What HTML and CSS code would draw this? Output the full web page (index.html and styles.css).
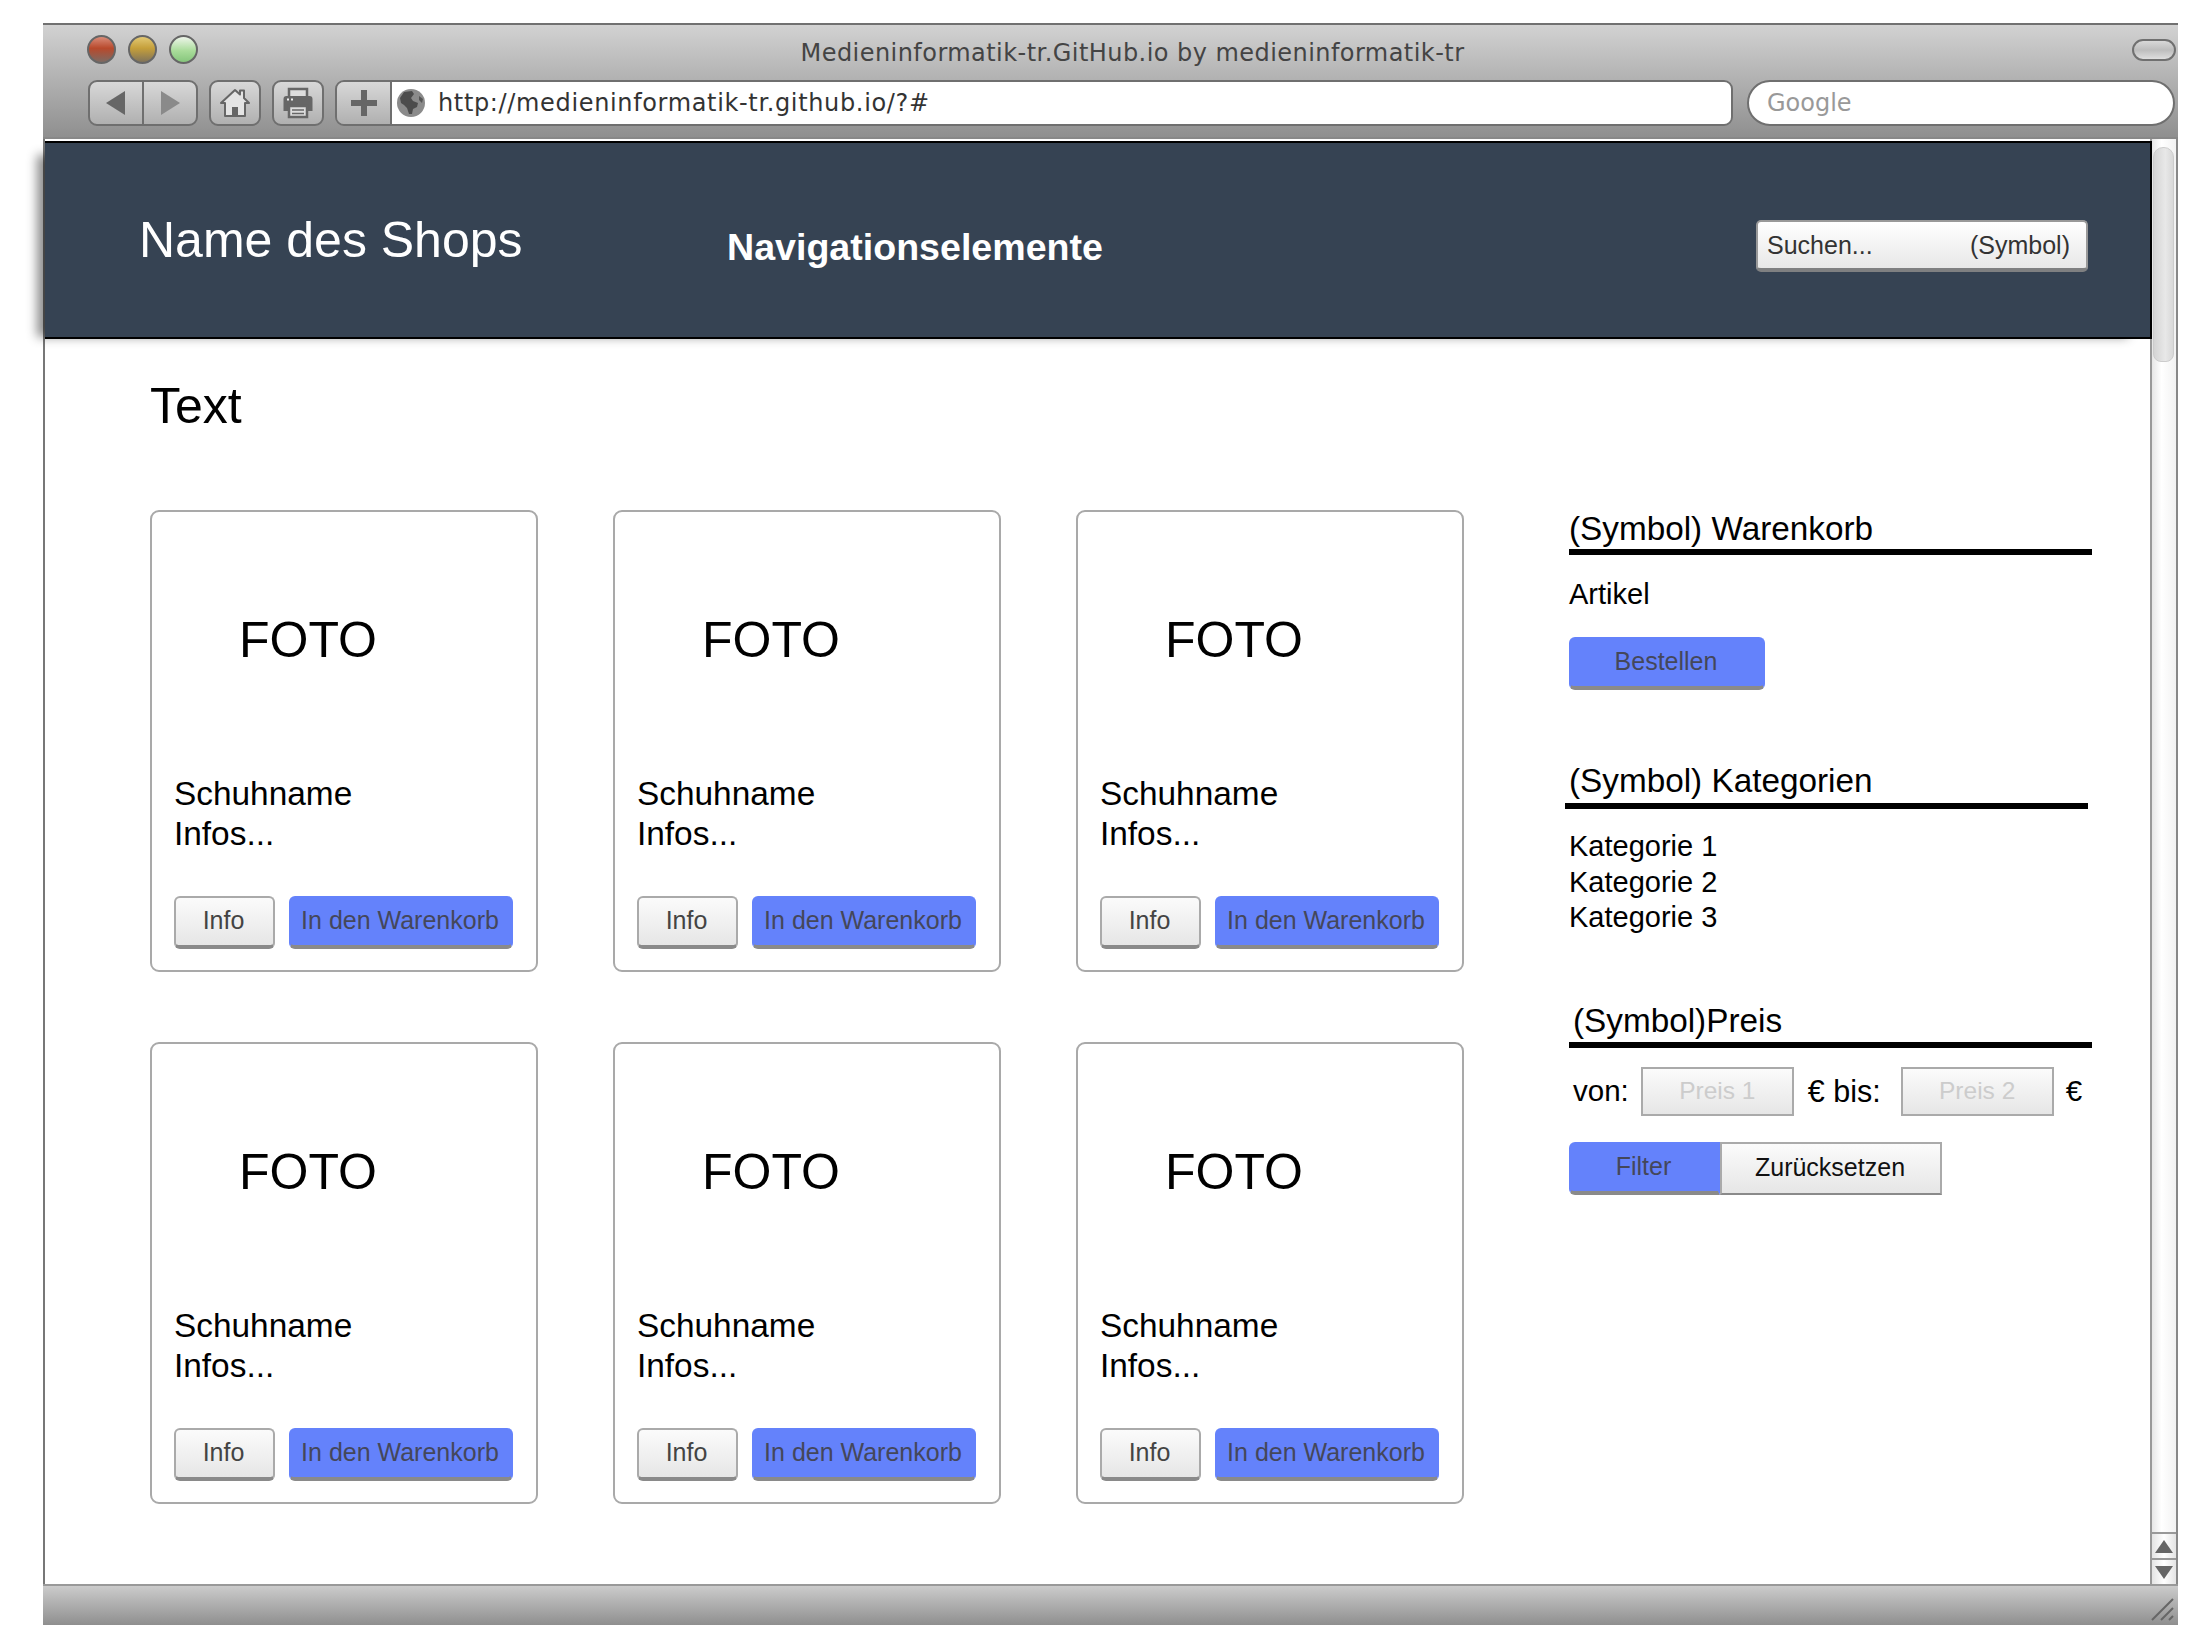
FILE: index.html
```html
<!DOCTYPE html>
<html>
<head>
    <meta charset="utf-8">
    <title>Name des Shops</title>
    <link rel="stylesheet" href="styles.css">
</head>
<body>
    <div class="window">
        <div class="chrome">
            <div class="titlerow">
                <div class="lights">
                    <span class="light red"></span>
                    <span class="light yellow"></span>
                    <span class="light green"></span>
                </div>
                <div class="wintitle">Medieninformatik-tr.GitHub.io by medieninformatik-tr</div>
                <span class="pill"></span>
            </div>
            <div class="toolrow">
                <div class="toolbtn navgroup">
                    <span class="navcell"><svg width="26" height="28" viewBox="0 0 26 28"><path d="M22 2V26L3 14Z" fill="#666"/></svg></span>
                    <span class="navcell"><svg width="26" height="28" viewBox="0 0 26 28"><path d="M4 2V26L23 14Z" fill="#8a8a8a"/></svg></span>
                </div>
                <div class="toolbtn single">
                    <svg width="32" height="30" viewBox="0 0 32 30"><path d="M2 15L16 2L21 6.500V2.500H25V10L30 15H26V28H6V15Z" fill="#e4e4e4" stroke="#666" stroke-width="2" stroke-linejoin="round"/><path d="M13 28V19H19V28Z" fill="#666"/></svg>
                </div>
                <div class="toolbtn single">
                    <svg width="34" height="32" viewBox="0 0 34 32"><path d="M8 9V2H26V9" fill="#ddd" stroke="#666" stroke-width="2.500"/><path d="M7 24H2.500V12Q2.500 9 5.500 9H28.500Q31.500 9 31.500 12V24H27V19H7Z" fill="#666"/><path d="M8 19H26V30H8Z" fill="#ddd" stroke="#666" stroke-width="2.500"/><path d="M11 23H23M11 26.500H23" stroke="#666" stroke-width="1.500"/><path d="M6 12.500H8M10 12.500H12" stroke="#eee" stroke-width="2"/></svg>
                </div>
                <div class="addressbar">
                    <span class="addbtn"><svg width="26" height="26" viewBox="0 0 26 26"><path d="M10 0H16V10H26V16H16V26H10V16H0V10H10Z" fill="#666"/></svg></span>
                    <div class="urlfield">
                        <svg width="28" height="28" viewBox="0 0 28 28"><circle cx="14" cy="14" r="14" fill="#8b8b8b"/><path d="M7 3L15 2L17 5L14 9L16 12L21 14L20 18L16 20L15 25L12 25L10 19L7 16L4 14L3 9Z" fill="#4c4c4c"/><path d="M22 7L26 10L25 14L22 11Z" fill="#555"/></svg>
                        <span class="url">http://medieninformatik-tr.github.io/?#</span>
                    </div>
                </div>
                <div class="googlefield">Google</div>
            </div>
        </div>

        <div class="viewport">
            <div class="page">
                <div class="shopheader">
                    <div class="shopname">Name des Shops</div>
                    <div class="shopnav">Navigationselemente</div>
                    <div class="shopsearch"><span>Suchen...</span><span>(Symbol)</span></div>
                </div>

                <div class="content">
                    <h1 class="intro">Text</h1>
                    <div class="mainrow">
                        <div class="cards">
                            <div class="card">
                                <div class="foto">FOTO</div>
                                <div class="cardtext">Schuhname<br>Infos...</div>
                                <div class="cardbtns"><button class="btn infobtn">Info</button><button class="btn blue cartbtn">In den Warenkorb</button></div>
                            </div>
                            <div class="card">
                                <div class="foto">FOTO</div>
                                <div class="cardtext">Schuhname<br>Infos...</div>
                                <div class="cardbtns"><button class="btn infobtn">Info</button><button class="btn blue cartbtn">In den Warenkorb</button></div>
                            </div>
                            <div class="card">
                                <div class="foto">FOTO</div>
                                <div class="cardtext">Schuhname<br>Infos...</div>
                                <div class="cardbtns"><button class="btn infobtn">Info</button><button class="btn blue cartbtn">In den Warenkorb</button></div>
                            </div>
                            <div class="card">
                                <div class="foto">FOTO</div>
                                <div class="cardtext">Schuhname<br>Infos...</div>
                                <div class="cardbtns"><button class="btn infobtn">Info</button><button class="btn blue cartbtn">In den Warenkorb</button></div>
                            </div>
                            <div class="card">
                                <div class="foto">FOTO</div>
                                <div class="cardtext">Schuhname<br>Infos...</div>
                                <div class="cardbtns"><button class="btn infobtn">Info</button><button class="btn blue cartbtn">In den Warenkorb</button></div>
                            </div>
                            <div class="card">
                                <div class="foto">FOTO</div>
                                <div class="cardtext">Schuhname<br>Infos...</div>
                                <div class="cardbtns"><button class="btn infobtn">Info</button><button class="btn blue cartbtn">In den Warenkorb</button></div>
                            </div>
                        </div>

                        <div class="sidebar">
                            <h2 class="sidehead">(Symbol) Warenkorb</h2>
                            <div class="article">Artikel</div>
                            <button class="btn blue orderbtn">Bestellen</button>

                            <h2 class="sidehead shifted">(Symbol) Kategorien</h2>
                            <div class="catlist">Kategorie 1<br>Kategorie 2<br>Kategorie 3</div>

                            <h2 class="sidehead pricehead">(Symbol)Preis</h2>
                            <div class="pricerow">
                                <span>von:</span>
                                <input class="priceinput" type="text" placeholder="Preis 1">
                                <span class="bis">€ bis:</span>
                                <input class="priceinput" type="text" placeholder="Preis 2">
                                <span class="euro">€</span>
                            </div>
                            <div class="filterbtns">
                                <button class="btn blue filterbtn">Filter</button><button class="btn resetbtn">Zurücksetzen</button>
                            </div>
                        </div>
                    </div>
                </div>
            </div>

            <div class="scrollbar">
                <div class="scrollthumb"></div>
                <div class="scrollarrow"><svg width="18" height="13" viewBox="0 0 18 13"><path d="M9 0L18 13H0Z" fill="#666"/></svg></div>
                <div class="scrollarrow"><svg width="18" height="13" viewBox="0 0 18 13"><path d="M0 0H18L9 13Z" fill="#666"/></svg></div>
            </div>
        </div>

        <div class="statusbar">
            <svg class="grip" width="24" height="24" viewBox="0 0 24 24"><path d="M2 23L23 2M11 23L23 11M19 23L23 19" stroke="#666" stroke-width="2"/></svg>
        </div>
    </div>
</body>
</html>
```

FILE: styles.css
```css
html, body {
    margin: 0;
    padding: 0;
    background-color: #fff;
}
body {
    padding: 23px 0 0 43px;
    font-family: "Liberation Sans", Arial, sans-serif;
    color: #000;
}
button, input {
    font-family: inherit;
    margin: 0;
}

/* browser window */
.window {
    width: 2135px;
    height: 1602px;
    display: flex;
    flex-direction: column;
    box-sizing: border-box;
    border-left: 2px solid #777;
    border-right: 2px solid #888;
}
.chrome {
    position: relative;
    z-index: 2;
    height: 116px;
    box-sizing: border-box;
    margin: 0 -2px;
    padding: 0 2px;
    border-top: 2px solid #717171;
    border-bottom: 2px solid #888;
    background: linear-gradient(#d2d2d2, #8f8f8f);
    font-family: "DejaVu Sans", sans-serif;
}
.titlerow {
    height: 55px;
    display: flex;
    align-items: center;
    position: relative;
}
.lights {
    display: flex;
    gap: 12px;
    margin-left: 42px;
    margin-top: -6px;
}
.light {
    width: 25px;
    height: 25px;
    border-radius: 50%;
    border: 2px solid #666;
}
.red { background: linear-gradient(#d98b78, #b8492c 45%, #7d6a62); }
.yellow { background: linear-gradient(#e2c873, #c59f3a 45%, #80735a); }
.green { background: linear-gradient(#eef5ea, #a9dc9a 55%, #86c67c); }
.wintitle {
    position: absolute;
    left: 0;
    right: 0;
    top: 13px;
    padding-left: 44px;
    text-align: center;
    font-size: 24px;
    letter-spacing: 0.450px;
    line-height: 30px;
    color: #444;
}
.pill {
    position: absolute;
    right: 0;
    top: 14px;
    width: 40px;
    height: 18px;
    border: 2px solid #707070;
    border-radius: 11px;
    background: linear-gradient(#d8d8d8, #bdbdbd 50%, #dedede);
}
.toolrow {
    display: flex;
    margin-left: 43px;
    height: 45px;
}
.toolbtn {
    box-sizing: border-box;
    height: 46px;
    border: 2px solid #6f6f6f;
    border-radius: 9px;
    background: linear-gradient(#d8d8d8, #b0b0b0);
    display: flex;
    align-items: center;
    justify-content: center;
}
.navgroup {
    width: 110px;
    margin-right: 11px;
}
.navcell {
    flex: 1;
    height: 100%;
    display: flex;
    align-items: center;
    justify-content: center;
}
.navcell + .navcell {
    border-left: 2px solid #6f6f6f;
}
.single {
    width: 52px;
    margin-right: 11px;
}
.addressbar {
    width: 1398px;
    height: 46px;
    box-sizing: border-box;
    display: flex;
    border: 2px solid #6f6f6f;
    border-radius: 9px;
    overflow: hidden;
}
.addbtn {
    width: 53px;
    display: flex;
    align-items: center;
    justify-content: center;
    background: linear-gradient(#d8d8d8, #b0b0b0);
    border-right: 2px solid #6f6f6f;
}
.urlfield {
    flex: 1;
    background-color: #fff;
    display: flex;
    align-items: center;
    padding-left: 5px;
    gap: 13px;
}
.url {
    font-size: 24px;
    letter-spacing: 0.650px;
    color: #333;
}
.googlefield {
    width: 428px;
    height: 46px;
    box-sizing: border-box;
    margin-left: 14px;
    border: 2px solid #6f6f6f;
    border-radius: 23px;
    background-color: #fff;
    padding-left: 18px;
    font-size: 24px;
    line-height: 42px;
    color: #999;
}

/* page inside the browser */
.viewport {
    flex: 1;
    display: flex;
    min-height: 0;
}
.page {
    flex: 1;
    min-width: 0;
    position: relative;
    z-index: 1;
}
.shopheader {
    height: 198px;
    box-sizing: border-box;
    margin: 2px -2px 0 0;
    display: flex;
    align-items: center;
    padding: 0 62px 0 94px;
    background-color: #364353;
    border: solid #000;
    border-width: 2px 2px 2px 0;
    box-shadow: -16px 6px 10px -8px rgba(0, 0, 0, 0.45);
    color: #fff;
}
.shopname {
    width: 588px;
    font-size: 50px;
    line-height: 60px;
}
.shopnav {
    flex: 1;
    font-size: 37.600px;
    font-weight: bold;
    margin-top: 15px;
}
.shopsearch {
    width: 332px;
    height: 52px;
    box-sizing: border-box;
    margin-top: 12px;
    padding: 0 16px 0 9px;
    display: flex;
    justify-content: space-between;
    align-items: center;
    border: 2px solid #999;
    border-bottom: 4px solid #7f8081;
    border-radius: 5px;
    background: linear-gradient(#fff, #e8e8e8);
    font-size: 25px;
    color: #333;
}
.content {
    padding-left: 105px;
}
.intro {
    margin: 34px 0 0;
    font-size: 50px;
    font-weight: normal;
    line-height: 66px;
}
.mainrow {
    display: flex;
    margin-top: 71px;
}
.cards {
    display: grid;
    grid-template-columns: repeat(3, 388px);
    grid-auto-rows: 462px;
    column-gap: 75px;
    row-gap: 70px;
}
.card {
    box-sizing: border-box;
    display: flex;
    flex-direction: column;
    padding: 99px 22px 21px;
    border: 2px solid #a9a9a9;
    border-radius: 9px;
}
.foto {
    padding-left: 65px;
    font-size: 50px;
    line-height: 58px;
}
.cardtext {
    margin-top: 105px;
    font-size: 33.400px;
    line-height: 39.500px;
}
.cardbtns {
    margin-top: auto;
    display: flex;
    gap: 14px;
}
.btn {
    height: 53px;
    box-sizing: border-box;
    padding: 0 2px 2px 0;
    border: 2px solid #aaa;
    border-bottom: 4px solid #8a8a8a;
    border-radius: 6px;
    background: linear-gradient(#fbfbfb, #e6e6e6);
    font-size: 25px;
    color: #444;
}
.blue {
    background: #6482fb;
    border-color: #6482fb;
    border-bottom-color: #8a8a8a;
    color: #44475a;
}
.infobtn { width: 101px; }
.cartbtn { width: 224px; }

/* right column */
.sidebar {
    width: 523px;
    margin: -1px 0 0 105px;
}
.sidehead {
    margin: 0;
    font-size: 33.300px;
    font-weight: normal;
    line-height: 40px;
    border-bottom: 6px solid #000;
}
.article {
    margin-top: 21px;
    font-size: 29px;
    line-height: 36px;
}
.orderbtn {
    display: block;
    width: 196px;
    margin-top: 25px;
}
.shifted {
    margin: 71px 4px 0 -4px;
    padding: 0 0 2px 4px;
}
.catlist {
    margin-top: 20px;
    font-size: 29px;
    line-height: 35.500px;
}
.pricehead {
    margin-top: 63px;
    padding-left: 4px;
    line-height: 43px;
}
.pricerow {
    display: flex;
    align-items: center;
    margin-top: 19px;
    padding-left: 4px;
    font-size: 29.500px;
}
.priceinput {
    width: 153px;
    height: 49px;
    box-sizing: border-box;
    margin-left: 12px;
    border: 2px solid #aaa;
    background: linear-gradient(#fbfbfb, #e6e6e6);
    text-align: center;
    font-size: 24.500px;
}
.priceinput::placeholder {
    color: #ccc;
    opacity: 1;
}
.bis {
    margin: 0 8px 0 2px;
    padding-left: 12px;
    font-size: 30.500px;
}
.euro {
    margin-left: 12px;
}
.filterbtns {
    display: flex;
    margin-top: 26px;
}
.filterbtn {
    width: 151px;
    border-radius: 6px 0 0 6px;
}
.resetbtn {
    width: 222px;
    border-radius: 0;
    border-bottom-width: 2px;
    color: #111;
}

/* scroll bar and status bar */
.scrollbar {
    width: 26px;
    box-sizing: border-box;
    border-left: 2px solid #999;
    display: flex;
    flex-direction: column;
    background: linear-gradient(90deg, #e6e6e6, #fff 40%, #f2f2f2);
}
.scrollthumb {
    height: 215px;
    margin: 8px 0 auto 1px;
    width: 21px;
    box-sizing: border-box;
    border: 1px solid #ccc;
    border-radius: 10px 10px 8px 8px;
    background: linear-gradient(90deg, #d4d4d4, #e8e8e8 60%, #d8d8d8);
}
.scrollarrow {
    height: 24px;
    display: flex;
    align-items: center;
    justify-content: center;
    border-top: 2px solid #999;
    background: linear-gradient(90deg, #e4e4e4, #fff 50%, #e4e4e4);
}
.statusbar {
    position: relative;
    height: 41px;
    box-sizing: border-box;
    margin: 0 -2px;
    border-top: 2px solid #999;
    background: linear-gradient(#cbcbcb, #8f8f8f);
}
.grip {
    position: absolute;
    right: 4px;
    bottom: 4px;
}
```
